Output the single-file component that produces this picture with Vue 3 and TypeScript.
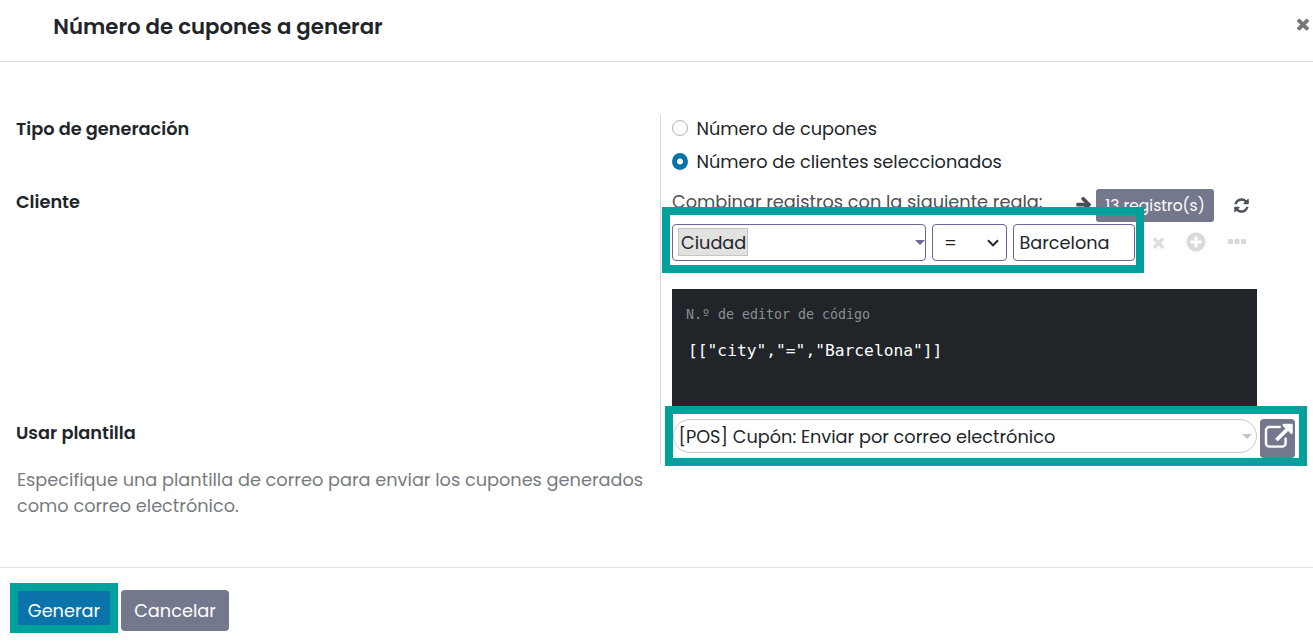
<script setup lang="ts">
import { ref } from 'vue'

type GenerationType = 'coupons' | 'customers'

const generationType = ref<GenerationType>('customers')
const options: { value: GenerationType; label: string }[] = [
  { value: 'coupons', label: 'Número de cupones' },
  { value: 'customers', label: 'Número de clientes seleccionados' },
]

const icons = {
  times:
    'M1490 1322q0 40-28 68l-136 136q-28 28-68 28t-68-28l-294-294-294 294q-28 28-68 28t-68-28l-136-136q-28-28-28-68t28-68l294-294-294-294q-28-28-28-68t28-68l136-136q28-28 68-28t68 28l294 294 294-294q28-28 68-28t68 28l136 136q28 28 28 68t-28 68l-294 294 294 294q28 28 28 68z',
  arrow:
    'M1600 960q0 54-37 91l-651 651q-39 37-91 37-51 0-90-37l-75-75q-38-38-38-91t38-91l293-293h-704q-52 0-84.5-37.5t-32.5-90.5v-128q0-53 32.5-90.5t84.5-37.5h704l-293-294q-38-36-38-90t38-90l75-75q38-38 90-38 53 0 91 38l651 651q37 35 37 90z',
  refresh:
    'M1639 1056q0 5-1 7-64 268-268 434.5t-478 166.5q-146 0-282.5-55t-243.5-157l-129 129q-19 19-45 19t-45-19-19-45v-448q0-26 19-45t45-19h448q26 0 45 19t19 45-19 45l-137 137q71 66 161 102t187 36q134 0 250-65t186-179q11-17 53-117 8-23 30-23h192q13 0 22.5 9.5t9.5 22.5zm25-800v448q0 26-19 45t-45 19h-448q-26 0-45-19t-19-45 19-45l138-138q-148-137-349-137-134 0-250 65t-186 179q-11 17-53 117-8 23-30 23h-199q-13 0-22.5-9.5t-9.5-22.5v-7q65-268 270-434.5t480-166.5q146 0 284 55.5t245 156.5l130-129q19-19 45-19t45 19 19 45z',
  plus:
    'M1344 960v-128q0-26-19-45t-45-19h-256v-256q0-26-19-45t-45-19h-128q-26 0-45 19t-19 45v256h-256q-26 0-45 19t-19 45v128q0 26 19 45t45 19h256v256q0 26 19 45t45 19h128q26 0 45-19t19-45v-256h256q26 0 45-19t19-45zm320-64q0 209-103 385.5t-279.5 279.5-385.5 103-385.5-103-279.5-279.5-103-385.5 103-385.5 279.5-279.5 385.5-103 385.5 103 279.5 279.5 103 385.5z',
  external:
    'M1408 928v320q0 119-84.5 203.5t-203.5 84.5h-832q-119 0-203.5-84.5t-84.5-203.5v-832q0-119 84.5-203.5t203.5-84.5h704q14 0 23 9t9 23v64q0 14-9 23t-23 9h-704q-66 0-113 47t-47 113v832q0 66 47 113t113 47h832q66 0 113-47t47-113v-320q0-14 9-23t23-9h64q14 0 23 9t9 23zm384-864v512q0 26-19 45t-45 19-45-19l-176-176-652 652q-10 10-23 10t-23-10l-114-114q-10-10-10-23t10-23l652-652-176-176q-19-19-19-45t19-45 45-19h512q26 0 45 19t19 45z',
}
</script>

<template>
  <div class="dialog">
    <header class="head">
      <h1 class="title">Número de cupones a generar</h1>
      <svg class="close" viewBox="0 0 1792 1792"><path :d="icons.times" /></svg>
    </header>

    <main class="body">
      <section class="labels">
        <div class="label label-type">Tipo de generación</div>
        <div class="label label-client">Cliente</div>
        <div class="label">Usar plantilla</div>
        <p class="help">
          Especifique una plantilla de correo para enviar los cupones generados<br />
          como correo electrónico.
        </p>
      </section>

      <section class="fields">
        <div
          v-for="o in options"
          :key="o.value"
          class="radio-row"
          @click="generationType = o.value"
        >
          <span class="radio" :class="{ on: generationType === o.value }"></span>
          <span>{{ o.label }}</span>
        </div>

        <div class="rule-row">
          <span class="rule-text">Combinar registros con la siguiente regla:</span>
          <svg class="arrow" viewBox="0 0 1792 1792"><path :d="icons.arrow" /></svg>
          <span class="records">13 registro(s)</span>
          <svg class="refresh" viewBox="0 0 1792 1792"><path :d="icons.refresh" /></svg>
        </div>

        <div class="domain-row">
          <div class="box field-box">
            <span class="chip">Ciudad</span>
            <span class="caret"></span>
          </div>
          <div class="box op-box">
            <span>=</span>
            <svg class="chevron" viewBox="0 0 12 8"><path d="M1 1.2 6 6.4 11 1.2" /></svg>
          </div>
          <div class="box value-box">Barcelona</div>
          <svg class="remove" viewBox="0 0 1792 1792"><path :d="icons.times" /></svg>
          <svg class="add" viewBox="0 0 1792 1792"><path :d="icons.plus" /></svg>
          <svg class="more" viewBox="0 0 18 5">
            <rect width="5" height="5" rx="1.2" />
            <rect x="6.5" width="5" height="5" rx="1.2" />
            <rect x="13" width="5" height="5" rx="1.2" />
          </svg>
          <div class="mark mark-domain"></div>
        </div>

        <div class="code">
          <div class="code-note">N.º de editor de código</div>
          <div class="code-text">[["city","=","Barcelona"]]</div>
        </div>

        <div class="template-row">
          <div class="template">
            <span>[POS] Cupón: Enviar por correo electrónico</span>
            <span class="caret grey"></span>
          </div>
          <div class="open">
            <svg viewBox="0 64 1792 1472"><path :d="icons.external" /></svg>
          </div>
          <div class="mark mark-template"></div>
        </div>
      </section>
    </main>

    <footer class="foot">
      <div class="mark-generate"><button class="primary">Generar</button></div>
      <button class="secondary">Cancelar</button>
    </footer>
  </div>
</template>

<style>
body {
  margin: 0;
  background: #fff;
  overflow: hidden;
}
</style>

<style scoped>
.dialog {
  box-sizing: border-box;
  width: 1313px;
  height: 644px;
  display: flex;
  flex-direction: column;
  overflow: hidden;
  background: #fff;
  color: #212529;
  font-family: Poppins, Inter, "Noto Sans", sans-serif;
  font-size: 17.73px;
  line-height: 26px;
  white-space: nowrap;
}
.dialog * {
  box-sizing: border-box;
}
svg {
  display: block;
  flex: none;
  fill: currentColor;
}
.head {
  height: 62px;
  flex: none;
  display: flex;
  justify-content: space-between;
  align-items: flex-start;
  border-bottom: 1px solid #dee2e6;
  padding: 12px 1px 0 53.3px;
}
.title {
  margin: 0;
  font-size: 21.28px;
  line-height: 30px;
  font-weight: 600;
}
.close {
  width: 18px;
  height: 18px;
  margin-top: 3px;
  color: #777;
}
.body {
  height: 505px;
  flex: none;
  display: flex;
  padding-top: 53px;
}
.labels {
  width: 660px;
  flex: none;
  padding: 1px 0 0 16px;
}
.label {
  font-weight: 600;
}
.label-type {
  height: 73px;
}
.label-client {
  height: 231px;
}
.help {
  margin: 21px 0 0 1px;
  color: #777b80;
}
.fields {
  width: 653px;
  height: 350px;
  flex: none;
  border-left: 1px solid #d6d6d6;
  padding-left: 11px;
}
.radio-row {
  display: flex;
  align-items: center;
  gap: 8.5px;
  height: 33px;
  padding-bottom: 6px;
}
.radio {
  width: 16px;
  height: 16px;
  margin-bottom: 1px;
  border: 1px solid #adb5bd;
  border-radius: 50%;
}
.radio.on {
  height: 17px;
  margin-bottom: 0;
  border: 0;
  background: radial-gradient(circle, #fff 2.6px, #0a73aa 3.4px);
}
.rule-row {
  display: flex;
  align-items: center;
  height: 33px;
  margin-top: 8px;
}
.rule-text {
  width: 371px;
  flex: none;
  color: #495057;
  padding-bottom: 7px;
}
.arrow {
  width: 18px;
  height: 18px;
  margin-left: 31.5px;
  margin-bottom: 3px;
  color: #495057;
}
.records {
  width: 118px;
  height: 33px;
  flex: none;
  margin-left: 3.5px;
  display: flex;
  align-items: center;
  justify-content: center;
  border-radius: 3px;
  background: #74788d;
  color: #fff;
  font-size: 15.5px;
}
.refresh {
  width: 17px;
  height: 17px;
  margin-left: 19px;
  color: #495057;
}
.domain-row {
  position: relative;
  display: flex;
  align-items: center;
  height: 37px;
  margin-top: 2px;
}
.box {
  height: 37px;
  flex: none;
  display: flex;
  align-items: center;
  justify-content: space-between;
  border: 1px solid #71639e;
  border-radius: 4px;
  background: #fff;
}
.field-box {
  width: 254px;
  padding: 0 0 0 5px;
}
.chip {
  width: 70px;
  height: 28px;
  margin-bottom: 1px;
  padding-left: 2px;
  border: 1px solid #c6c6c6;
  background: #e2e2e0;
  line-height: 27px;
}
.caret {
  border: 5px solid transparent;
  border-top-color: #71639e;
  border-bottom: 0;
}
.caret.grey {
  border-top-color: #c3c3c3;
}
.op-box {
  width: 75px;
  margin-left: 6px;
  padding: 0 7px 0 11px;
}
.chevron {
  width: 12px;
  height: 8px;
}
.chevron path {
  fill: none;
  stroke: #212529;
  stroke-width: 2;
}
.value-box {
  width: 122px;
  margin-left: 6px;
  padding-left: 5.4px;
}
.remove {
  width: 17px;
  height: 17px;
  margin-left: 15px;
  color: #dedede;
}
.add {
  width: 22px;
  height: 22px;
  margin: 0 0 1px 18px;
  color: #d8dadb;
}
.more {
  width: 18px;
  height: 5px;
  margin: 0 0 2px 21px;
  color: #d8d8da;
}
.mark {
  position: absolute;
  border: 8px solid #00a09d;
  pointer-events: none;
}
.mark-domain {
  left: -10px;
  top: -17px;
  width: 482px;
  height: 66px;
}
.code {
  width: 585px;
  height: 117px;
  margin-top: 28px;
  padding: 16px 14px;
  background: #212529;
  font-family: "DejaVu Sans Mono", monospace;
}
.code-note {
  font-size: 13.29px;
  line-height: 20px;
  color: #8d8f91;
}
.code-text {
  margin: 14px 0 0 2px;
  font-size: 16.25px;
  line-height: 24px;
  color: #fff;
}
.template-row {
  position: relative;
  display: flex;
  align-items: flex-start;
  height: 60px;
  padding: 13px 0 0 1px;
}
.template {
  width: 584px;
  height: 34px;
  flex: none;
  display: flex;
  align-items: center;
  justify-content: space-between;
  padding: 1px 4px 0 4.4px;
  border: 1px solid #c9c9c9;
  border-radius: 17px;
}
.open {
  width: 35px;
  height: 39px;
  margin-left: 3px;
  padding: 5.5px 0 0 5.3px;
  border-radius: 4px;
  background: #74788d;
  color: #fff;
}
.open svg {
  width: 27.5px;
  height: 22.6px;
  stroke: currentColor;
  stroke-width: 30;
  overflow: visible;
}
.mark-template {
  left: -7px;
  top: 0;
  width: 642px;
  height: 60px;
}
.foot {
  flex: 1;
  display: flex;
  align-items: flex-start;
  gap: 3px;
  border-top: 1px solid #dee2e6;
  padding: 15px 0 0 10px;
}
.foot button {
  margin: 0;
  padding: 0;
  border: 0;
  font: inherit;
  color: #fff;
}
.mark-generate {
  width: 108px;
  height: 50px;
  border: 8px solid #00a09d;
}
.foot .primary {
  display: block;
  width: 92px;
  height: 34px;
  padding-top: 5px;
  background: #0a73aa;
}
.foot .secondary {
  width: 108px;
  height: 41px;
  margin-top: 7px;
  border-radius: 4px;
  background: #74788d;
}
</style>
